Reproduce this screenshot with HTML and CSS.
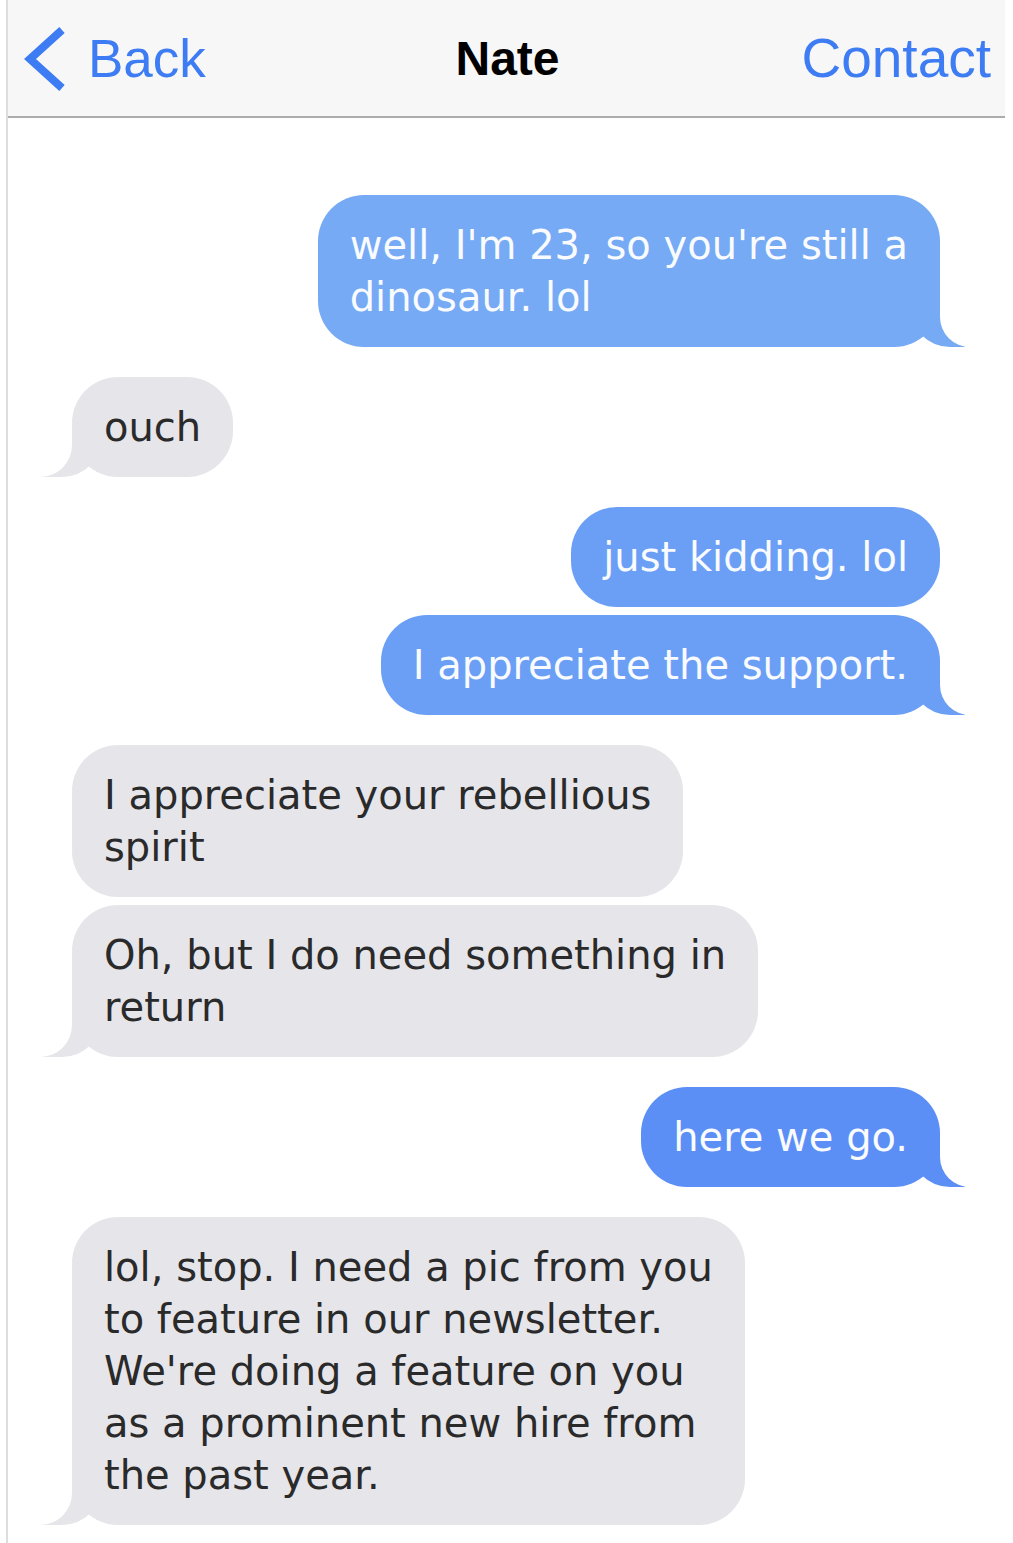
FILE: index.html
```html
<!DOCTYPE html>
<html lang="en">
<head>
    <meta charset="utf-8">
    <meta name="viewport" content="width=device-width, initial-scale=1.0">
    <title>Nate</title>
    <link rel="stylesheet" href="styles.css">
</head>
<body>
    <div class="phone">
        <header class="nav">
            <a class="nav-back" href="#">
                <svg class="chevron" viewBox="0 0 44 68" width="44" height="68">
                    <polyline points="38,5 6,34 38,63" fill="none" stroke="currentColor" stroke-width="8"/>
                </svg>
                Back
            </a>
            <h1 class="nav-title">Nate</h1>
            <a class="nav-action" href="#">Contact</a>
        </header>

        <main class="thread">
            <div class="msg sent tone-1 tail">well, I'm 23, so you're still a<br>dinosaur. lol</div>
            <div class="msg recv tail">ouch</div>
            <div class="msg sent tone-2">just kidding. lol</div>
            <div class="msg sent tone-2 follow tail">I appreciate the support.</div>
            <div class="msg recv">I appreciate your rebellious<br>spirit</div>
            <div class="msg recv follow tail">Oh, but I do need something in<br>return</div>
            <div class="msg sent tone-3 tail">here we go.</div>
            <div class="msg recv tail">lol, stop. I need a pic from you<br>to feature in our newsletter.<br>We're doing a feature on you<br>as a prominent new hire from<br>the past year.</div>
        </main>
    </div>
</body>
</html>
```

FILE: styles.css
```css
body {
    margin: 0;
    background-color: #ffffff;
    font-family: "DejaVu Sans", Verdana, sans-serif;
}
.phone {
    margin: 0 8px 0 6px;
    border-left: 2px solid #dddddd;
    min-height: 1543px;
}
.nav {
    display: grid;
    grid-template-columns: 1fr auto 1fr;
    align-items: center;
    height: 116px;
    padding: 0 14px 0 16px;
    background-color: #f7f7f7;
    border-bottom: 2px solid #acacac;
    font-family: "Liberation Sans", Arial, sans-serif;
}
.nav-back,
.nav-action {
    color: #3d7cf3;
    text-decoration: none;
    font-size: 53px;
}
.nav-back {
    display: flex;
    align-items: center;
    gap: 20px;
}
.chevron {
    display: block;
    margin-top: 2px;
}
.nav-title {
    margin: 0;
    font-size: 48px;
    font-weight: bold;
    color: #000000;
}
.nav-action {
    justify-self: end;
    font-size: 55px;
}
.thread {
    display: flex;
    flex-direction: column;
    padding: 77px 65px 20px 64px;
}
.msg {
    position: relative;
    margin-top: 30px;
    padding: 24px 32px;
    border-radius: 46px;
    font-size: 40px;
    line-height: 52px;
    white-space: nowrap;
    background-color: var(--bubble);
}
.msg:first-child {
    margin-top: 0;
}
.msg.follow {
    margin-top: 8px;
}
.sent {
    align-self: flex-end;
    color: #f9fbff;
}
.recv {
    align-self: flex-start;
    color: #2a2a2a;
    --bubble: #e5e5ea;
}
.tone-1 { --bubble: #76aaf4; }
.tone-2 { --bubble: #6b9ff5; }
.tone-3 { --bubble: #5c8ff5; }

/* bubble tails */
.tail::before,
.tail::after {
    content: "";
    position: absolute;
    bottom: 0;
    height: 50px;
}
.tail::before {
    background-color: var(--bubble);
}
.tail::after {
    background-color: #ffffff;
}
.sent.tail::before {
    right: -25px;
    width: 55px;
    border-bottom-left-radius: 40px;
}
.sent.tail::after {
    right: -30px;
    width: 30px;
    border-bottom-left-radius: 30px;
}
.recv.tail::before {
    left: -34px;
    width: 64px;
    border-bottom-right-radius: 40px;
}
.recv.tail::after {
    left: -40px;
    width: 40px;
    border-bottom-right-radius: 32px;
}
```
